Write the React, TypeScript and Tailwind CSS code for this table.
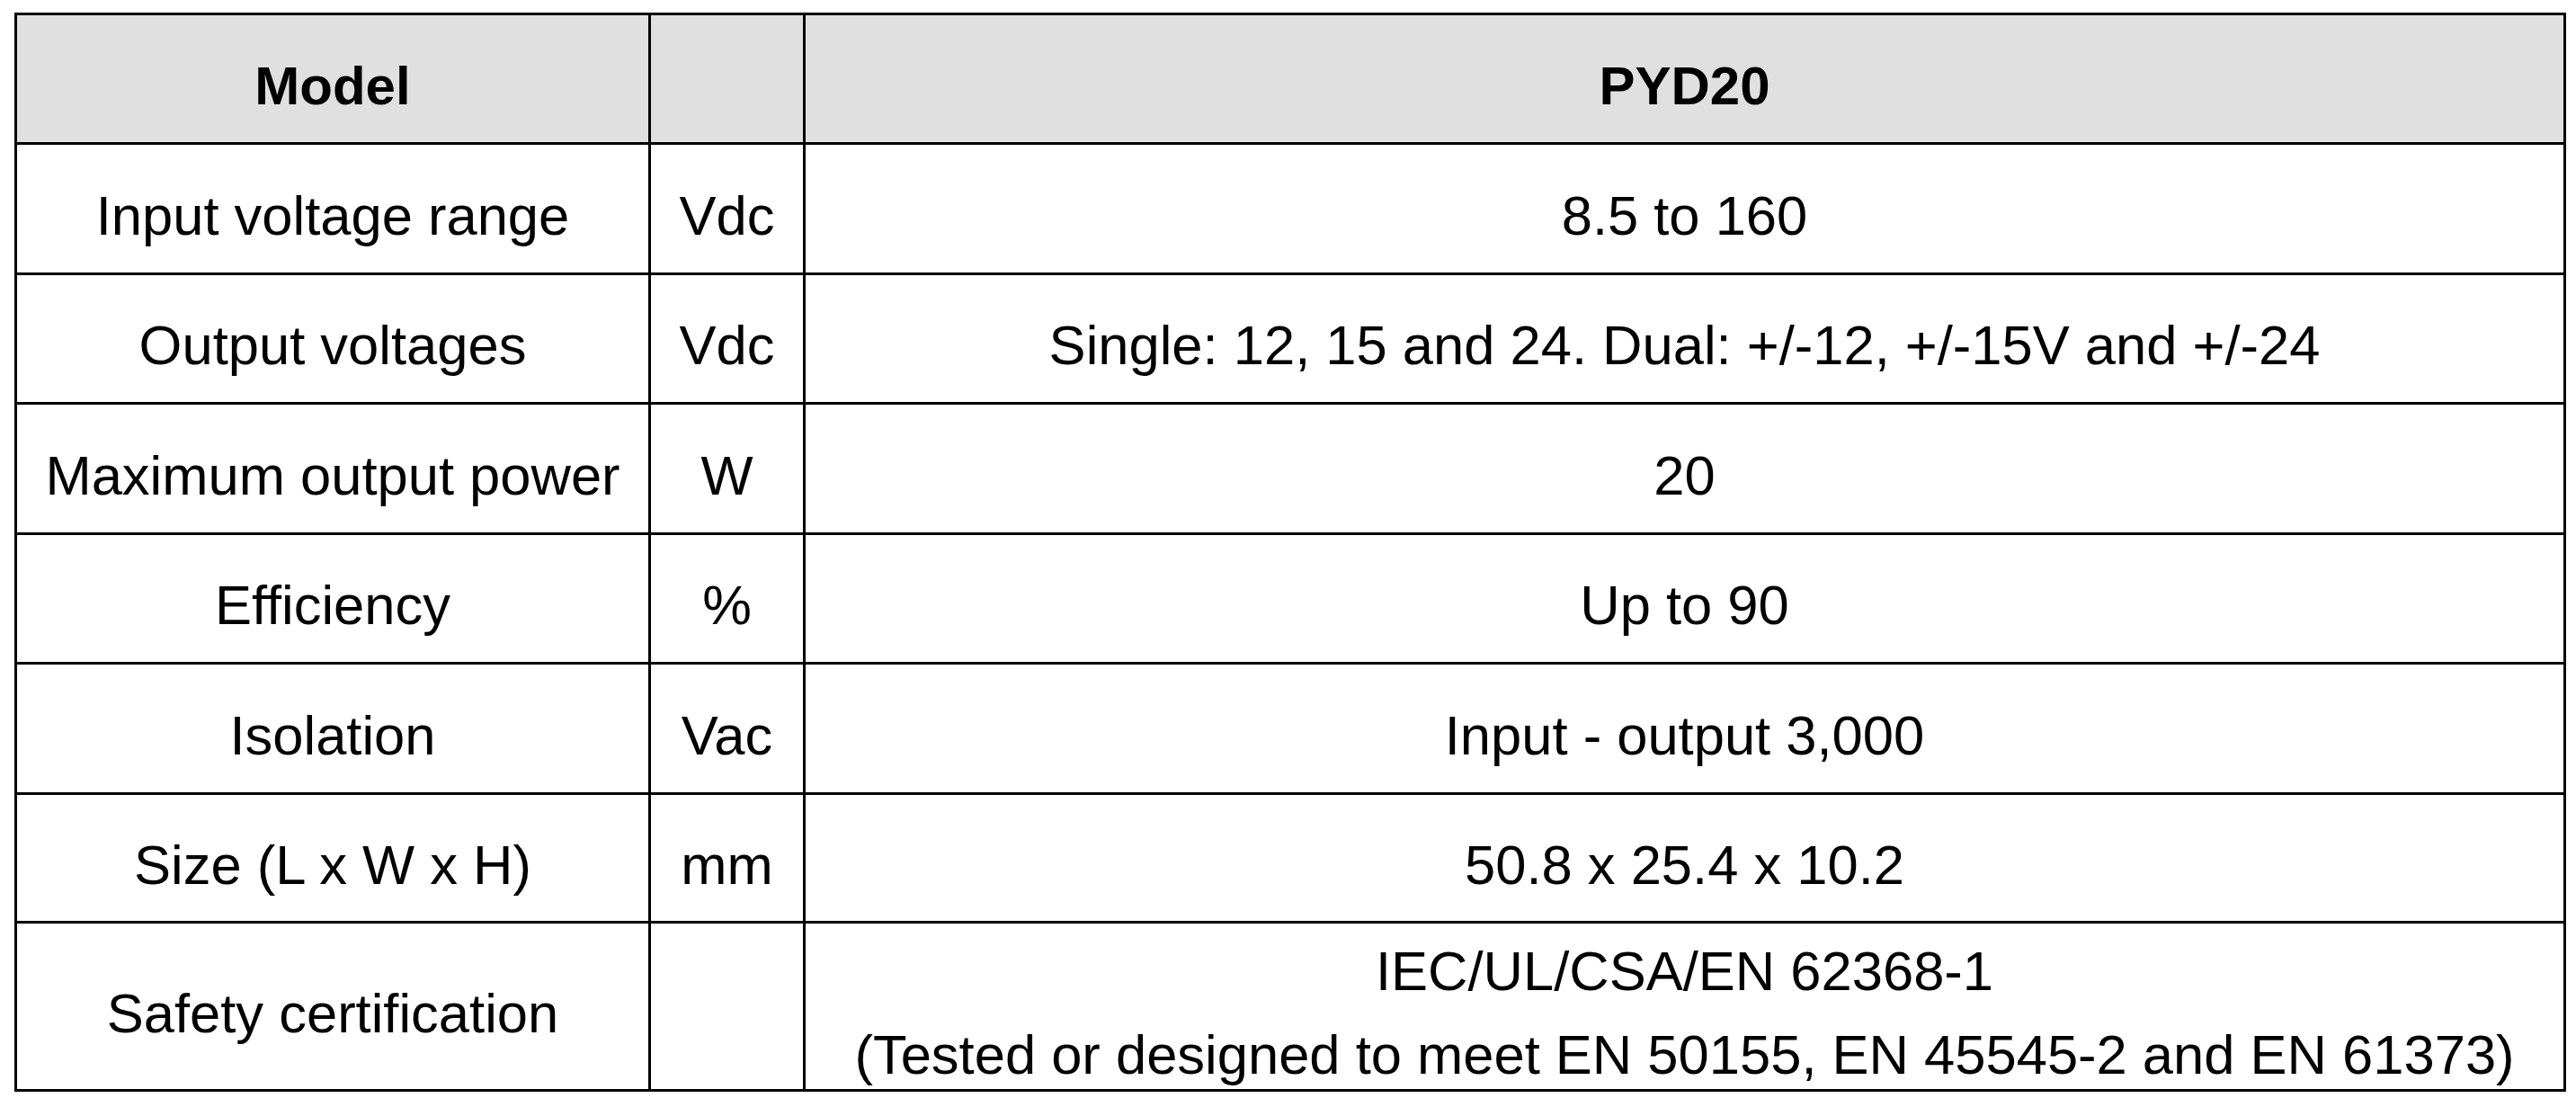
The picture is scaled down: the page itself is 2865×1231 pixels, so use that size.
const rows: { label: string; unit: string; value: string }[] = [
  { label: 'Input voltage range', unit: 'Vdc', value: '8.5 to 160' },
  { label: 'Output voltages', unit: 'Vdc', value: 'Single: 12, 15 and 24. Dual: +/-12, +/-15V and +/-24' },
  { label: 'Maximum output power', unit: 'W', value: '20' },
  { label: 'Efficiency', unit: '%', value: 'Up to 90' },
  { label: 'Isolation', unit: 'Vac', value: 'Input - output 3,000' },
  { label: 'Size (L x W x H)', unit: 'mm', value: '50.8 x 25.4 x 10.2' },
];

export default function App() {
  return (
    <div className="min-h-screen bg-white pt-[14px] pl-[16px] font-['Liberation_Sans',Arial,sans-serif] text-black">
      <div className="grid w-[2838px] grid-cols-[702px_169px_1fr] grid-rows-[141px_142px_141px_142px_141px_142px_140px_184px] gap-[3px] bg-black p-[3px]">
        {/* header */}
        <div className="flex items-center justify-center bg-[#e0e0e0] pt-[16px] text-[60px] font-bold">Model</div>
        <div className="bg-[#e0e0e0]" />
        <div className="flex items-center justify-center bg-[#e0e0e0] pt-[16px] text-[60px] font-bold">PYD20</div>

        {rows.map((r) => (
          <div key={r.label} className="contents">
            <div className="flex items-center justify-center bg-white pt-[16px] text-[61.5px]">{r.label}</div>
            <div className="flex items-center justify-center bg-white pt-[16px] text-[61.5px]">{r.unit}</div>
            <div className="flex items-center justify-center bg-white pt-[16px] text-[61.5px]">{r.value}</div>
          </div>
        ))}

        {/* last row, two lines in the value cell */}
        <div className="flex items-center justify-center bg-white pt-[16px] text-[61.5px]">Safety certification</div>
        <div className="bg-white" />
        <div className="flex flex-col items-center bg-white pt-[6px] text-[61.5px] leading-[93px]">
          <div>IEC/UL/CSA/EN 62368-1</div>
          <div>(Tested or designed to meet EN 50155, EN 45545-2 and EN 61373)</div>
        </div>
      </div>
    </div>
  );
}
